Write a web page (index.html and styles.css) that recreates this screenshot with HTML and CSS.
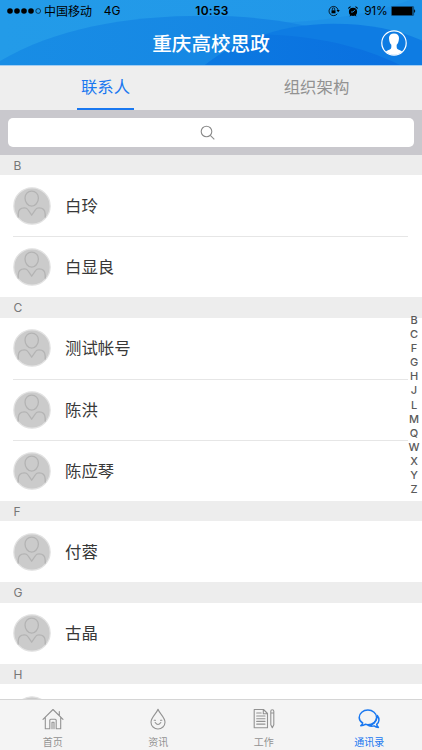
FILE: index.html
```html
<!DOCTYPE html>
<html lang="zh-CN">
<head>
<meta charset="utf-8">
<title>重庆高校思政</title>
<link rel="stylesheet" href="styles.css">
</head>
<body>
<svg class="defs" width="0" height="0">
  <defs>
    <symbol id="person" viewBox="0 0 38 38">
      <circle cx="19" cy="19" r="18.2" fill="#cbcbcb" stroke="#e2e2e2" stroke-width="1.2"/>
      <g fill="none" stroke="#b3b3b3" stroke-width="1.3" stroke-linejoin="round" stroke-linecap="round">
        <path d="M18.700 4.200c-4 0-6.700 2.900-6.700 6.700 0 4.500 3.200 8.300 6.700 8.300s6.700-3.800 6.700-8.300c0-3.800-2.700-6.700-6.700-6.700z"/>
        <path d="M5.200 30v-2.700c0-4.500 2.200-6.500 6.200-6.500 1.900 0 2.500.3 3.400 1.700l3.900 5.700 3.900-5.700c.9-1.400 1.500-1.700 3.400-1.700 4 0 6.200 2 6.200 6.500V30"/>
      </g>
    </symbol>
  </defs>
</svg>
<div class="app">
  <header class="header">
    <svg class="waves" viewBox="0 0 422 66" preserveAspectRatio="none">
      <defs>
        <linearGradient id="sky" x1="0" y1="0" x2="1" y2="0"><stop offset="0" stop-color="#239be8"/><stop offset="1" stop-color="#2197e9"/></linearGradient>
        <linearGradient id="mid" x1="0" y1="0" x2="1" y2="0"><stop offset="0" stop-color="#188de5"/><stop offset="1" stop-color="#1583e3"/></linearGradient>
        <linearGradient id="deep" x1="0" y1="0" x2="1" y2="0"><stop offset="0" stop-color="#0c79e1"/><stop offset="1" stop-color="#0a70e0"/></linearGradient>
      </defs>
      <path fill="url(#sky)" d="M0 0h422v66H0z"/>
      <path fill="#1b8ee6" d="M250 24C305 24 365 17 410 0h12v66H250z" opacity=".65"/>
      <path fill="url(#mid)" d="M0 62C55 29 125 16 205 16c85 0 150 18 200 50H0z"/>
      <path fill="#0e7ce3" d="M205 66C240 38 288 24 333 24c35 0 65 6 89 17v25z"/>
      <path fill="url(#deep)" d="M205 66c17-14 37-24 58-31 52 1 99 12 137 31z"/>
    </svg>
    <div class="status">
      <svg class="signal" viewBox="0 0 35 8" width="35" height="8"><circle cx="3" cy="4" r="2.800"/><circle cx="10" cy="4" r="2.800"/><circle cx="17" cy="4" r="2.800"/><circle cx="24" cy="4" r="2.800"/><circle cx="31.200" cy="4" r="2.400" fill="none" stroke="#000" stroke-width=".6"/></svg>
      <span class="carrier">中国移动</span><span class="network">4G</span>
      <span class="time">10:53</span>
      <svg class="lock" width="12" height="12" viewBox="0 0 12 12"><path d="M9.300 8.800A4.600 4.600 0 1 1 10.100 5" fill="none" stroke="#000" stroke-width=".8"/><path d="M8.500 5h3.300l-1.600 2.200z"/><path d="M3.500 5.300h4v3h-4z"/><path d="M4.300 5.300V4a1.200 1.200 0 0 1 2.400 0v1.300" fill="none" stroke="#000" stroke-width=".7"/></svg>
      <svg class="alarm" width="10" height="11" viewBox="0 0 10 11"><circle cx="5" cy="5.800" r="4.100"/><path d="M.3 3A2 2 0 0 1 3.200.7zM9.700 3A2 2 0 0 0 6.800.7zM1.500 10.500l1-2 1 1zM8.500 10.500l-1-2-1 1z"/><path d="M7 3.800L5 6H3" fill="none" stroke="#2594e8" stroke-width=".9"/></svg>
      <span class="percent">91%</span>
      <svg class="battery" width="25" height="10" viewBox="0 0 25 10"><rect x=".4" y=".4" width="22.200" height="9.200" rx="1" fill="none" stroke="#000" stroke-width=".5"/><rect x="1" y="1" width="20.500" height="8"/><path d="M23.200 3.200c1.300.4 1.300 3.200 0 3.600z"/></svg>
    </div>
    <h1 class="title">重庆高校思政</h1>
    <svg class="profile" width="26" height="26" viewBox="0 0 26 26"><circle cx="13" cy="13" r="12.200" fill="none" stroke="#fff" stroke-width="1.200"/><path fill="#fff" d="M13 3.600c-3.400 0-5.100 2-5 4.600.1 3 1 5.300 2.300 6.600.2 2.800-.1 4-1.500 4.600-1.700.7-3.100 1.100-3.900 2a11.400 11.400 0 0 0 16.200 0c-.8-.9-2.200-1.300-3.900-2-1.400-.6-1.700-1.800-1.500-4.600 1.300-1.300 2.200-3.600 2.300-6.600.1-2.600-1.600-4.600-5-4.600z"/></svg>
  </header>

  <nav class="tabs">
    <div class="tab"><span class="tab-label active">联系人</span></div>
    <div class="tab"><span class="tab-label">组织架构</span></div>
  </nav>

  <div class="search"><div class="field">
    <svg width="15" height="15" viewBox="0 0 15 15" fill="none" stroke="#8b8b8b" stroke-width="1.100"><circle cx="6.500" cy="6.500" r="5.300"/><path d="M10.300 10.300l4 4"/></svg>
  </div></div>

  <main class="list">
    <h2 class="letter">B</h2>
    <div class="row"><svg class="avatar"><use href="#person"/></svg><span>白玲</span></div>
    <div class="row"><svg class="avatar"><use href="#person"/></svg><span>白显良</span></div>
    <h2 class="letter">C</h2>
    <div class="row"><svg class="avatar"><use href="#person"/></svg><span>测试帐号</span></div>
    <div class="row"><svg class="avatar"><use href="#person"/></svg><span>陈洪</span></div>
    <div class="row"><svg class="avatar"><use href="#person"/></svg><span>陈应琴</span></div>
    <h2 class="letter">F</h2>
    <div class="row"><svg class="avatar"><use href="#person"/></svg><span>付蓉</span></div>
    <h2 class="letter">G</h2>
    <div class="row"><svg class="avatar"><use href="#person"/></svg><span>古晶</span></div>
    <h2 class="letter">H</h2>
    <div class="row"><svg class="avatar"><use href="#person"/></svg></div>
  </main>

  <aside class="index"><span>B</span><span>C</span><span>F</span><span>G</span><span>H</span><span>J</span><span>L</span><span>M</span><span>Q</span><span>W</span><span>X</span><span>Y</span><span>Z</span></aside>

  <footer class="bar">
    <div class="item">
      <svg width="22" height="22" viewBox="0 0 22 22"><path d="M1 11.300L11 1.500l10 9.800M3.300 9.500v11.200h4.500v-8.400q0-1 1-1h4.400q1 0 1 1v8.400h4.500V9.500M17.300 7.300V3.500M10 20.700v-6.500h2v6.500" /></svg>
      <span>首页</span>
    </div>
    <div class="item">
      <svg width="22" height="22" viewBox="0 0 22 22"><path d="M11 1.200C9.500 5.500 4 9.300 4 14.200a7 6.800 0 0 0 14 0C18 9.300 12.500 5.500 11 1.200z"/><path d="M8.200 14.500q2.800 4 5.600 0M7.200 12.300h1.300M13.500 12.300h1.300"/></svg>
      <span>资讯</span>
    </div>
    <div class="item">
      <svg width="22" height="22" viewBox="0 0 22 22"><path d="M1.200 1.500h9.300l4 4v14.200H1.200zM10.300 1.800v4h4M3.700 5h4.500M3.700 8h8.300M3.700 10.700h8.300M3.700 13.400h8.300M3.700 16.100h8.300M17.800 3.200q0-1.500 1.500-1.500t1.500 1.500v13.500l-1.500 3-1.500-3zM17.800 5h3"/></svg>
      <span>工作</span>
    </div>
    <div class="item current">
      <svg width="22" height="22" viewBox="0 0 22 22"><path stroke-width="1.500" d="M4.700 15C2.400 13.600 1.200 11.600 1.200 9.400c0-4.100 3.900-7.300 8.700-7.300s8.700 3.200 8.700 7.300-3.900 7.300-8.700 7.300c-1 0-1.900-.1-2.700-.4-1.400 1-2.800 1.300-4.400 1.400 1.200-.9 1.800-1.700 1.900-2.700z"/><path stroke-width="1.500" d="M19.300 7.500c2.400 3 2.200 6.700-.6 8.900.1 1.300.7 2.200 1.700 3-1.600 0-3-.5-4.300-1.500-2 .6-4.300.3-6-.6 4.600.2 8.700-3.300 9.200-9.800"/></svg>
      <span>通讯录</span>
    </div>
  </footer>
</div>
</body>
</html>
```
FILE: styles.css
```css
* { box-sizing: border-box; }

body {
  margin: 0;
  font-family: Roboto, "Noto Sans CJK SC", sans-serif;
}

.defs { position: absolute; }

.app {
  position: relative;
  display: flex;
  flex-direction: column;
  width: 422px;
  height: 750px;
  overflow: hidden;
  background: #fff;
}

.header {
  position: relative;
  flex: none;
  height: 66px;
  border-bottom: 1px solid #a3cdf2;
}

.waves {
  position: absolute;
  inset: 0;
  width: 100%;
  height: 100%;
}

.status {
  position: relative;
  display: flex;
  align-items: center;
  height: 22px;
  padding: 0 6px 0 7px;
  font-family: Inter, "Noto Sans CJK SC", sans-serif;
  font-size: 12px;
  line-height: 22px;
  white-space: nowrap;
}

.carrier { width: 60px; margin-left: 2px; padding-top: 1px; }
.network { width: 92px; }
.time { width: 35px; font-weight: 600; letter-spacing: 0.3px; }
.lock { margin-left: 98px; }
.alarm { margin-left: 8px; }
.percent { width: 27px; margin-left: 6px; letter-spacing: -0.2px; }
.status svg { flex: none; }

.title {
  position: relative;
  margin: 7px 0 0;
  color: #fff;
  font-size: 19.6px;
  font-weight: 500;
  line-height: 31px;
  text-align: center;
}

.profile {
  position: absolute;
  top: 30px;
  right: 15px;
}

.tabs {
  flex: none;
  display: flex;
  height: 44px;
  background: #eee;
}

.tab {
  flex: 1;
  display: flex;
  justify-content: center;
}

.tab-label {
  height: 44px;
  padding: 1px 4px 0;
  color: #929292;
  font-size: 16.4px;
  line-height: 42px;
}

.tab-label.active {
  color: #1a78f0;
  border-bottom: 2px solid #1a78f0;
}

.search {
  flex: none;
  height: 45px;
  padding: 8px;
  background: #c9c8cd;
}

.field {
  display: flex;
  align-items: center;
  justify-content: center;
  height: 29px;
  padding-right: 8px;
  border-radius: 5px;
  background: #fff;
}

.list {
  flex: 1;
  min-height: 0;
  overflow: hidden;
}

.letter {
  height: 20.3px;
  margin: 0;
  padding-left: 13.5px;
  background: #ededed;
  color: #777;
  font-family: Inter, sans-serif;
  font-size: 12px;
  font-weight: 400;
  line-height: 21px;
}

.row {
  display: flex;
  align-items: center;
  height: 61.1px;
  margin: 0 14px 0 13px;
  color: #383838;
  font-size: 16.4px;
  line-height: 24px;
}

.row span { padding-top: 2px; }

.row + .row { border-top: 1px solid #e6e6e6; }

.avatar {
  width: 38px;
  height: 38px;
  margin-right: 14px;
}

.index {
  position: absolute;
  top: 313px;
  right: 2px;
  display: flex;
  flex-direction: column;
  width: 12px;
  color: #5a5a5a;
  font-family: Inter, sans-serif;
  font-size: 11px;
  font-weight: 500;
  line-height: 14.1px;
  text-align: center;
}

.bar {
  flex: none;
  display: flex;
  height: 51px;
  border-top: 1px solid #d5d5d5;
  background: #f4f4f4;
}

.item {
  flex: 1;
  display: flex;
  flex-direction: column;
  align-items: center;
  padding-top: 8px;
  color: #929292;
  font-size: 10px;
  line-height: 14px;
}

.item svg {
  margin-bottom: 6px;
  fill: none;
  stroke: currentColor;
  stroke-width: 1.1;
  stroke-linejoin: round;
  stroke-linecap: round;
}

.item.current { color: #1a78f0; }
```
